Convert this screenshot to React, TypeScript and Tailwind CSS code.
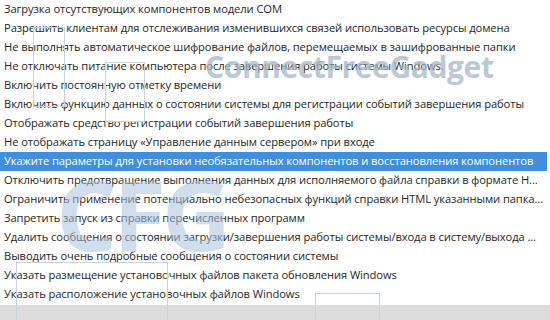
import React from 'react';

const rows = [
  'Загрузка отсутствующих компонентов модели COM',
  'Разрешить клиентам для отслеживания изменившихся связей использовать ресурсы домена',
  'Не выполнять автоматическое шифрование файлов, перемещаемых в зашифрованные папки',
  'Не отключать питание компьютера после завершения работы системы Windows.',
  'Включить постоянную отметку времени',
  'Включить функцию данных о состоянии системы для регистрации событий завершения работы',
  'Отображать средство регистрации событий завершения работы',
  'Не отображать страницу «Управление данным сервером» при входе',
  'Укажите параметры для установки необязательных компонентов и восстановления компонентов',
  'Отключить предотвращение выполнения данных для исполняемого файла справки в формате H...',
  'Ограничить применение потенциально небезопасных функций справки HTML указанными папка...',
  'Запретить запуск из справки перечисленных программ',
  'Удалить сообщения о состоянии загрузки/завершения работы системы/входа в систему/выхода ...',
  'Выводить очень подробные сообщения о состоянии системы',
  'Указать размещение установочных файлов пакета обновления Windows',
  'Указать расположение установочных файлов Windows',
];

const selected = 8;

export default function App() {
  return (
    <div className="relative w-[550px] h-[320px] bg-white overflow-hidden flex flex-col" style={{fontFamily: '"Open Sans", "Noto Sans", sans-serif'}}>
      <ul className="flex flex-col">
        {rows.map((r, i) => (
          <li
            key={i}
            className={`h-[19px] w-[547px] pl-[4px] flex items-center text-[11.2px] tracking-[-0.1px] whitespace-nowrap overflow-hidden ${
              i === selected ? 'bg-[#3f8fdd] text-white' : 'text-[#1f1f1f]'
            }`}>
            {r}
          </li>
        ))}
      </ul>
      <div className="flex-1 mt-[1px] bg-[#dcdcdc]" />

      {/* watermark */}
      <div className="absolute inset-0 pointer-events-none">
        <div className="absolute left-[33px] top-[27px] w-[32px] h-[80px] border border-[#c9d3de]" />
        <div className="absolute left-[105px] top-[62px] w-[40px] h-[60px] border border-[#c9d3de]" />
        <div className="absolute left-[16px] top-[262px] w-[152px] h-[80px] border border-[#c9d3de]" />
        <div className="absolute left-[315px] top-[293px] w-[65px] h-[60px] border border-[#c9d3de]" />
        <div className="absolute left-[205px] top-[52px] text-[30px] leading-none font-bold text-[#a3b6ca] opacity-75 tracking-[-0.4px]">
          ConnectFreeGadget
        </div>
        <div className="absolute left-[56px] top-[166px] text-[96px] leading-none font-bold text-[#a9c2dd] opacity-55 tracking-[-4px]">
          CFG
        </div>
      </div>
    </div>
  );
}
